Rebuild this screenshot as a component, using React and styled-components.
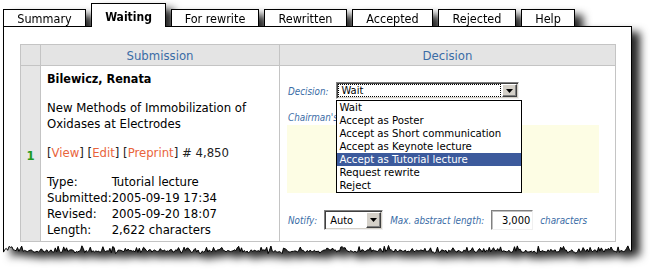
import React from "react";
import styled, { createGlobalStyle } from "styled-components";

const FONT = `"DejaVu Sans Condensed", "DejaVu Sans", sans-serif`;

const Global = createGlobalStyle`
  html, body { margin: 0; padding: 0; background: #fff; }
  body { font-family: ${FONT}; font-stretch: condensed; color: #000; }
`;

const Page = styled.div`
  width: 652px;
  height: 271px;
  box-sizing: border-box;
  padding: 3px 0 0 3px;
  overflow: hidden;
`;

const Sheet = styled.div`
  width: 629px;
  display: flex;
  flex-direction: column;
  filter: drop-shadow(8px 6px 4px rgba(0, 0, 0, 0.85));
`;

const TabBar = styled.div`
  display: flex;
  align-items: flex-end;
  gap: 5px;
  height: 23px;
  position: relative;
  z-index: 1;
`;

const Tab = styled.div`
  box-sizing: border-box;
  width: ${(p) => p.$w}px;
  height: ${(p) => (p.$active ? 24 : 17)}px;
  margin-bottom: ${(p) => (p.$active ? -1 : 0)}px;
  padding-top: ${(p) => (p.$active ? 2 : 0)}px;
  border: 1px solid #000;
  border-bottom: none;
  background: #fff;
  display: flex;
  align-items: center;
  justify-content: center;
  font-size: ${(p) => (p.$active ? 12 : 12.5)}px;
  font-weight: ${(p) => (p.$active ? 700 : 400)};
  color: #000;
`;

const Panel = styled.div`
  border: 1px solid #000;
  border-bottom: none;
  background: #fff;
  padding: 17px 15px 4px 16px;
`;

const Grid = styled.div`
  display: grid;
  grid-template-columns: 19px 238px 1fr;
  grid-template-rows: 20px 175px;
  gap: 1px;
  background: #c4c4c4;
  border: 1px solid #c4c4c4;
`;

const HeadCell = styled.div`
  background: #e4e4e4;
  color: #3a6ca6;
  font-size: 13px;
  display: flex;
  align-items: center;
  justify-content: center;
`;

const NumCell = styled.div`
  background: #e6e6e6;
  color: #1f9a1f;
  font-weight: 700;
  font-size: 13px;
  display: flex;
  align-items: center;
  justify-content: center;
  padding-top: 3px;
`;

const SubCell = styled.div`
  background: #fff;
  padding: 5px 6px 3px 6px;
  font-size: 13px;
  line-height: 16px;
  display: flex;
  flex-direction: column;
  gap: 13px;
`;

const Author = styled.div`
  font-weight: 700;
  font-size: 12.5px;
`;

const Title = styled.div``;

const Links = styled.div`
  color: #222;
`;

const LinkText = styled.span`
  color: #e9643c;
`;

const Info = styled.div`
  display: grid;
  grid-template-columns: auto 1fr;
`;

const DecCell = styled.div`
  background: #fff;
  padding: 16px 16px 0 8px;
  display: flex;
  flex-direction: column;
`;

const Label = styled.span`
  font-style: italic;
  font-size: 9.8px;
  color: #3a6ca6;
  padding-top: ${(p) => p.$dy || 0}px;
  white-space: nowrap;
`;

const FieldRow = styled.div`
  display: flex;
  align-items: center;
  gap: 7px;
  margin-top: ${(p) => p.$mt || 0}px;
`;

const ChairLabel = styled.div`
  margin-top: 12px;
  height: 13px;
  line-height: 13px;
  font-style: italic;
  font-size: 9.8px;
  color: #3a6ca6;
`;

const CommentBox = styled.div`
  margin: 1px 0 0 -1px;
  height: 68px;
  background: #fdfde4;
`;

const Select = styled.div`
  position: relative;
  box-sizing: border-box;
  width: ${(p) => p.$w}px;
  height: ${(p) => p.$h}px;
  background: #fff;
  border: 1px solid;
  border-color: #808080 #f0f0f0 #f0f0f0 #808080;
  box-shadow: inset 1px 1px 0 #404040, inset -1px -1px 0 #d4d0c8;
  padding: 1px;
  display: flex;
  align-items: stretch;
  gap: 1px;
  font-size: 11px;
`;

const SelectValue = styled.div`
  flex: 1;
  display: flex;
  align-items: center;
  padding-left: ${(p) => p.$pl}px;
  outline: ${(p) => (p.$focus ? "1px dotted #000" : "none")};
  outline-offset: -1px;
`;

const ArrowBtn = styled.div`
  box-sizing: border-box;
  width: 15px;
  height: ${(p) => p.$h}px;
  align-self: center;
  background: #d4d0c8;
  border: 1px solid;
  border-color: #fff #404040 #404040 #fff;
  box-shadow: inset -1px -1px 0 #808080;
  display: flex;
  align-items: center;
  justify-content: center;
`;

const DropList = styled.div`
  position: absolute;
  left: -1px;
  top: 17px;
  width: 186px;
  box-sizing: border-box;
  border: 1px solid #000;
  background: #fff;
  z-index: 5;
`;

const Option = styled.div`
  height: 13px;
  line-height: 13px;
  padding-left: 3px;
  font-size: 11.3px;
  white-space: nowrap;
  background: ${(p) => (p.$sel ? "#3c5a9c" : "#fff")};
  color: ${(p) => (p.$sel ? "#fff" : "#000")};
`;

const NumInput = styled.div`
  box-sizing: border-box;
  width: 42px;
  height: 20px;
  border: 1px solid;
  border-color: #808080 #f0f0f0 #f0f0f0 #808080;
  box-shadow: inset 1px 1px 0 #c0c0c0;
  background: #fff;
  font-size: 11px;
  display: flex;
  align-items: center;
  justify-content: flex-end;
  padding-right: 2px;
`;

const Torn = styled.svg`
  display: block;
  overflow: visible;
`;

const TABS = [
  ["Summary", 83],
  ["Waiting", 75],
  ["For rewrite", 88],
  ["Rewritten", 83],
  ["Accepted", 81],
  ["Rejected", 78],
  ["Help", 54],
];

const OPTIONS = [
  "Wait",
  "Accept as Poster",
  "Accept as Short communication",
  "Accept as Keynote lecture",
  "Accept as Tutorial lecture",
  "Request rewrite",
  "Reject",
];

const W = 629;
const BASE = 5;
const jagPoints = (() => {
  let seed = 17;
  const rnd = () => {
    seed = (seed * 9301 + 49297) % 233280;
    return seed / 233280;
  };
  const pts = [];
  for (let x = 0.5; x <= W - 0.5; x += 1.4) {
    const r = rnd();
    const spike = r < 0.2 ? -1.5 - 3 * rnd() : r > 0.92 ? 1.5 : 0;
    pts.push([x, BASE + (rnd() - 0.5) * 2.6 + spike]);
  }
  pts.push([W - 0.5, BASE]);
  return pts;
})();
const jagLine = jagPoints.map(([x, y]) => `L${x.toFixed(1)},${y.toFixed(1)}`).join(" ");
const strokePath = `M0.5,0 ${jagLine} L${W - 0.5},0`;
const fillPath = `M0,0 L0,${BASE} ${jagLine} L${W},${BASE} L${W},0 Z`;

const Caret = () => (
  <svg width="7" height="4" viewBox="0 0 7 4">
    <path d="M0,0 L7,0 L3.5,4 Z" fill="#000" />
  </svg>
);

export default function App() {
  return (
    <Page>
      <Global />
      <Sheet>
        <TabBar>
          {TABS.map(([t, w]) => (
            <Tab key={t} $w={w} $active={t === "Waiting"}>
              {t}
            </Tab>
          ))}
        </TabBar>
        <Panel>
          <Grid>
            <HeadCell />
            <HeadCell>Submission</HeadCell>
            <HeadCell>Decision</HeadCell>
            <NumCell>1</NumCell>
            <SubCell>
              <Author>Bilewicz, Renata</Author>
              <Title>
                New Methods of Immobilization of
                <br />
                Oxidases at Electrodes
              </Title>
              <Links>
                [<LinkText>View</LinkText>] [<LinkText>Edit</LinkText>] [
                <LinkText>Preprint</LinkText>] # 4,850
              </Links>
              <Info>
                <span>Type:</span>
                <span>Tutorial lecture</span>
                <span>Submitted:</span>
                <span>2005-09-19 17:34</span>
                <span>Revised:</span>
                <span>2005-09-20 18:07</span>
                <span>Length:</span>
                <span>2,622 characters</span>
              </Info>
            </SubCell>
            <DecCell>
              <FieldRow>
                <Label $dy={2}>Decision:</Label>
                <Select $w={183} $h={17}>
                  <SelectValue $focus $pl={4}>Wait</SelectValue>
                  <ArrowBtn $h={13}>
                    <Caret />
                  </ArrowBtn>
                  <DropList>
                    {OPTIONS.map((o, i) => (
                      <Option key={o} $sel={i === 4}>
                        {o}
                      </Option>
                    ))}
                  </DropList>
                </Select>
              </FieldRow>
              <ChairLabel>Chairman's comment:</ChairLabel>
              <CommentBox />
              <FieldRow $mt={17}>
                <Label $dy={1}>Notify:</Label>
                <Select $w={59} $h={20}>
                  <SelectValue $pl={4}>Auto</SelectValue>
                  <ArrowBtn $h={16}>
                    <Caret />
                  </ArrowBtn>
                </Select>
                <Label $dy={1}>Max. abstract length:</Label>
                <NumInput>3,000</NumInput>
                <Label $dy={1}>characters</Label>
              </FieldRow>
            </DecCell>
          </Grid>
        </Panel>
        <Torn width={W} height="10" viewBox={`0 0 ${W} 10`}>
          <path d={fillPath} fill="#fff" />
          <path d={strokePath} fill="none" stroke="#000" strokeWidth="1" />
        </Torn>
      </Sheet>
    </Page>
  );
}
